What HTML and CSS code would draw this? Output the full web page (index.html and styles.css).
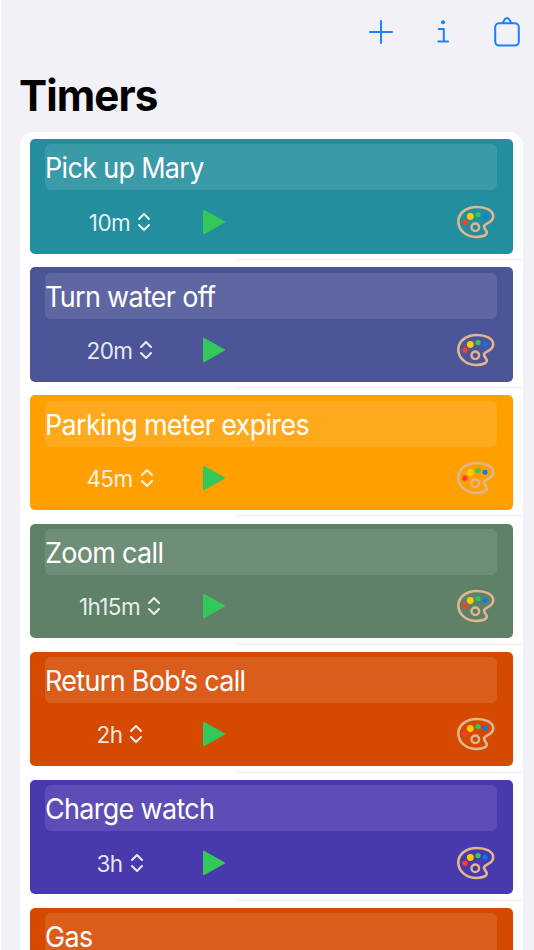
FILE: index.html
```
<!DOCTYPE html>
<html lang="en">
<head>
  <meta charset="UTF-8" />
  <title>Timers</title>
  <link rel="stylesheet" href="styles.css">
</head>
<body>

  <!-- shared icons -->
  <svg class="icons">
    <symbol id="updown" viewBox="0 0 14 20">
      <path d="M2 6.9 L7 2 L12 6.9 M2 13.1 L7 18 L12 13.1" fill="none" stroke="currentColor" stroke-width="2.1" stroke-linecap="round" stroke-linejoin="round" />
    </symbol>
    <symbol id="play" viewBox="0 0 24 26">
      <path d="M2 1.8 L22 13 L2 24.2 Z" fill="#34c759" stroke="#34c759" stroke-width="2" stroke-linejoin="round" />
    </symbol>
    <symbol id="palette" viewBox="0 0 40 36">
      <path d="M21 3 C10 3 2.3 9.2 2.3 17.5 C2.3 26.5 10.5 33 20.5 33 C26 33 30.8 31.2 30.8 28.4 C30.8 26.2 28 25 28 22.7 C28 19.4 37.2 19 37.2 12.4 C37.2 6.4 29.5 3 21 3 Z" fill="none" stroke="#dfb68d" stroke-width="2.6" />
      <circle cx="19.3" cy="23.3" r="3.8" fill="none" stroke="#dfb68d" stroke-width="2.4" />
      <circle cx="9" cy="18.2" r="2.7" fill="#ff3b30" />
      <circle cx="14.3" cy="12.5" r="3.4" fill="#ffcc00" />
      <circle cx="22" cy="10.6" r="2.7" fill="#34c759" />
      <circle cx="29" cy="12.2" r="2.5" fill="#007aff" />
    </symbol>
  </svg>

  <div class="toolbar">
    <svg class="add" viewBox="0 0 24 24"><path d="M12 1 V23 M1 12 H23" /></svg>
    <svg class="info" viewBox="0 0 12 24">
      <circle cx="6" cy="2.3" r="2" />
      <path d="M1.8 9 H6.8 V21.3 M1.3 21.5 H11" />
    </svg>
    <svg class="clipboard" viewBox="0 0 26 30">
      <rect x="1.2" y="6.2" width="23.6" height="22.4" rx="4" />
      <path d="M8.8 6 C8.8 4.7 9.7 4.3 10.2 3.6 C10.8 0.6 15.2 0.6 15.8 3.6 C16.3 4.3 17.2 4.7 17.2 6" />
    </svg>
  </div>

  <h1>Timers</h1>

  <div class="list">
    <div class="row">
      <div class="timer teal">
        <div class="name"><span>Pick up Mary</span></div>
        <div class="controls">
          <div class="duration"><span>10m</span><svg class="updown"><use href="#updown" /></svg></div>
          <svg class="play"><use href="#play" /></svg>
          <svg class="palette"><use href="#palette" /></svg>
        </div>
      </div>
    </div>
    <div class="row">
      <div class="timer indigo">
        <div class="name"><span>Turn water off</span></div>
        <div class="controls">
          <div class="duration"><span>20m</span><svg class="updown"><use href="#updown" /></svg></div>
          <svg class="play"><use href="#play" /></svg>
          <svg class="palette"><use href="#palette" /></svg>
        </div>
      </div>
    </div>
    <div class="row">
      <div class="timer orange">
        <div class="name"><span>Parking meter expires</span></div>
        <div class="controls">
          <div class="duration"><span>45m</span><svg class="updown"><use href="#updown" /></svg></div>
          <svg class="play"><use href="#play" /></svg>
          <svg class="palette"><use href="#palette" /></svg>
        </div>
      </div>
    </div>
    <div class="row">
      <div class="timer green">
        <div class="name"><span>Zoom call</span></div>
        <div class="controls">
          <div class="duration"><span>1h15m</span><svg class="updown"><use href="#updown" /></svg></div>
          <svg class="play"><use href="#play" /></svg>
          <svg class="palette"><use href="#palette" /></svg>
        </div>
      </div>
    </div>
    <div class="row">
      <div class="timer red">
        <div class="name"><span>Return Bob’s call</span></div>
        <div class="controls">
          <div class="duration"><span>2h</span><svg class="updown"><use href="#updown" /></svg></div>
          <svg class="play"><use href="#play" /></svg>
          <svg class="palette"><use href="#palette" /></svg>
        </div>
      </div>
    </div>
    <div class="row">
      <div class="timer purple">
        <div class="name"><span>Charge watch</span></div>
        <div class="controls">
          <div class="duration"><span>3h</span><svg class="updown"><use href="#updown" /></svg></div>
          <svg class="play"><use href="#play" /></svg>
          <svg class="palette"><use href="#palette" /></svg>
        </div>
      </div>
    </div>
    <div class="row">
      <div class="timer red">
        <div class="name"><span>Gas</span></div>
      </div>
    </div>
  </div>

</body>
</html>
```
FILE: styles.css
```
html, body {
  margin: 0;
  padding: 0;
  height: 100%;
  overflow: hidden;
}

body {
  box-sizing: border-box;
  font-family: Inter, 'Liberation Sans', sans-serif;
  background-color: #f2f1f7;
  border-left: 1px solid #fff;
}

svg {
  display: block;
  flex: none;
}

.icons {
  display: none;
}

.toolbar {
  display: flex;
  justify-content: flex-end;
  align-items: center;
  height: 64px;
  padding-right: 14px;
}

.toolbar svg {
  fill: none;
  stroke: #1a80ff;
  stroke-width: 2;
  stroke-linecap: round;
  stroke-linejoin: round;
}

.add {
  width: 24px;
  height: 24px;
  margin-right: 44px;
}

.info {
  width: 12px;
  height: 24px;
  margin-right: 45px;
}

.toolbar .info circle {
  fill: #1a80ff;
  stroke: none;
}

.clipboard {
  width: 26px;
  height: 30px;
}

h1 {
  margin: 0 0 0 18px;
  height: 68px;
  font-size: 43px;
  line-height: 63px;
  font-weight: 700;
  letter-spacing: -0.9px;
  color: #000;
  transform: scaleX(0.98);
  transform-origin: left;
}

.list {
  width: 483px;
  margin-left: 18.5px;
  padding: 0 10px;
  border-radius: 14px 14px 0 0;
  background-color: #fff;
}

/* separator starts under the play button and runs to the card edge */
.row {
  box-sizing: border-box;
  height: 128.15px;
  padding-top: 7.2px;
  margin-right: -10px;
  padding-right: 10px;
  background: linear-gradient(#ececee, #ececee) no-repeat right bottom / 287px 1px;
}

.timer {
  box-sizing: border-box;
  height: 114.4px;
  padding: 5.2px 15.5px 0;
  border-radius: 5px;
  color: #fff;
}

.teal { background-color: #228e9e; }
.indigo { background-color: #4c5597; }
.orange { background-color: #ff9f00; }
.green { background-color: #5e8168; }
.red { background-color: #d64900; }
.purple { background-color: #4839ad; }

.name {
  height: 46px;
  border-radius: 6px;
  background-color: rgba(255, 255, 255, 0.11);
  font-size: 28.5px;
  line-height: 48px;
  letter-spacing: -0.7px;
  white-space: nowrap;
}

.name span {
  display: inline-block;
  transform: scaleX(0.945);
  transform-origin: left;
}

.controls {
  display: flex;
  align-items: center;
  height: 63px;
}

.duration {
  display: flex;
  justify-content: center;
  align-items: center;
  gap: 7px;
  width: 150px;
  font-size: 22.5px;
  line-height: 26px;
  letter-spacing: -0.6px;
  color: rgba(255, 255, 255, 0.88);
}

.duration span {
  padding-top: 2px;
}

.updown {
  width: 14px;
  height: 20px;
}

.play {
  width: 24px;
  height: 26px;
  margin-left: 7px;
}

.palette {
  width: 40px;
  height: 36px;
  margin: 0 1px 0 auto;
}
```
